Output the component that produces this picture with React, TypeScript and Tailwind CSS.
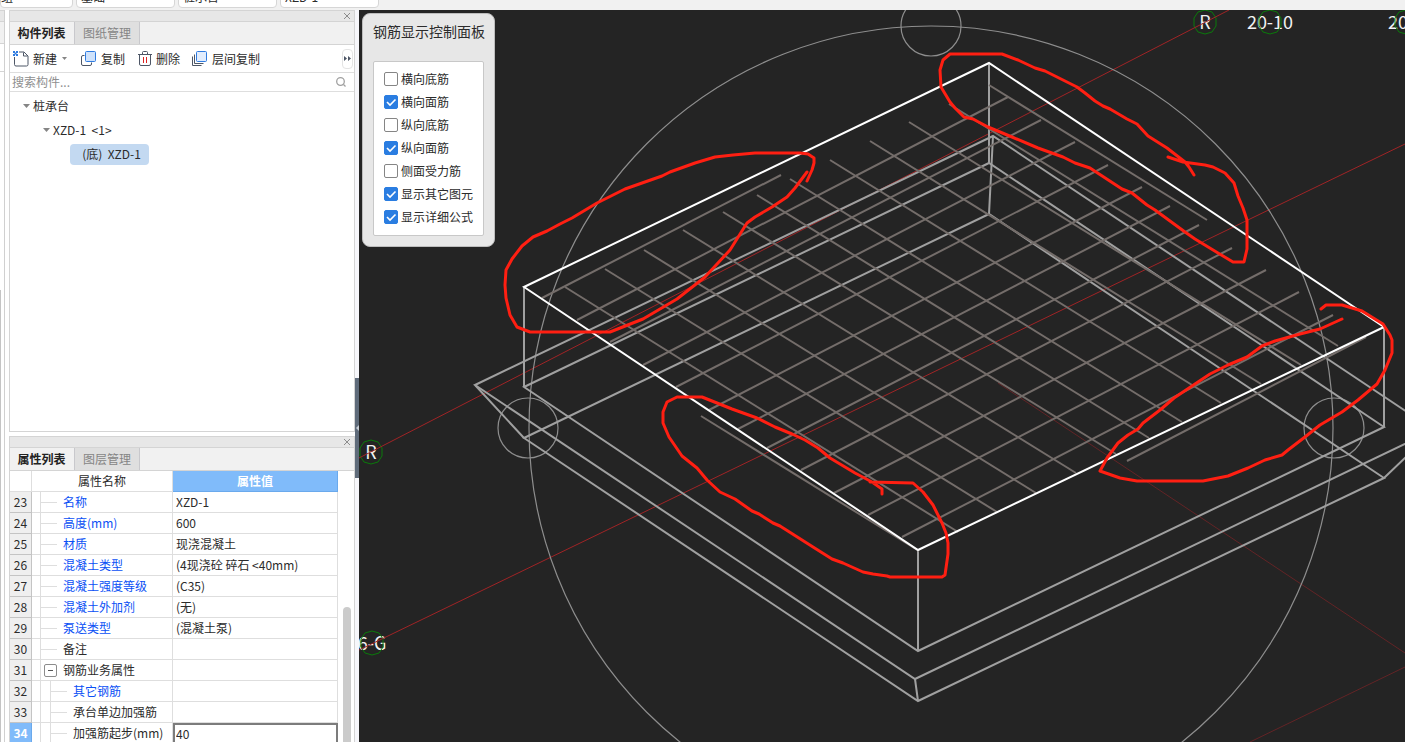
import React, { useState } from "react";

type PropertyRow = {
    id: number,
    name: string,
    value: string,
    color: string,
    level: number,
    group?: boolean
}

type Point = [number, number];

const BLUE = "text-[#0a50f5]";
const DARK = "text-[#2b2b2b]";

const rows: PropertyRow[] = [
    { id: 23, name: "名称", value: "XZD-1", color: BLUE, level: 1 },
    { id: 24, name: "高度(mm)", value: "600", color: BLUE, level: 1 },
    { id: 25, name: "材质", value: "现浇混凝土", color: BLUE, level: 1 },
    { id: 26, name: "混凝土类型", value: "(4现浇砼 碎石 <40mm)", color: BLUE, level: 1 },
    { id: 27, name: "混凝土强度等级", value: "(C35)", color: BLUE, level: 1 },
    { id: 28, name: "混凝土外加剂", value: "(无)", color: BLUE, level: 1 },
    { id: 29, name: "泵送类型", value: "(混凝土泵)", color: BLUE, level: 1 },
    { id: 30, name: "备注", value: "", color: DARK, level: 1 },
    { id: 31, name: "钢筋业务属性", value: "", color: DARK, level: 1, group: true },
    { id: 32, name: "其它钢筋", value: "", color: BLUE, level: 2 },
    { id: 33, name: "承台单边加强筋", value: "", color: DARK, level: 2 },
    { id: 34, name: "加强筋起步(mm)", value: "40", color: DARK, level: 2 },
];

const displayOptions = [
    { label: "横向底筋", checked: false },
    { label: "横向面筋", checked: true },
    { label: "纵向底筋", checked: false },
    { label: "纵向面筋", checked: true },
    { label: "侧面受力筋", checked: false },
    { label: "显示其它图元", checked: true },
    { label: "显示详细公式", checked: true },
];

// x1, y1, x2, y2
const rebars = [
    [542, 298, 781, 175], [577, 320, 1008, 97], [610, 342, 1041, 120], [643, 365, 1075, 142],
    [676, 387, 1108, 165], [709, 410, 1142, 187], [738, 429, 1170, 206], [767, 448, 1199, 225],
    [801, 470, 1232, 248], [834, 493, 1266, 270], [868, 515, 1299, 292], [902, 537, 1333, 315],
    [1127, 461, 1366, 337],
    [989, 85, 1207, 220], [949, 104, 1338, 346], [909, 122, 1301, 365], [870, 141, 1261, 384],
    [830, 160, 1221, 403], [790, 179, 1182, 422], [757, 195, 1149, 438], [723, 212, 1116, 454],
    [683, 230, 1076, 473], [644, 250, 1036, 493], [605, 269, 997, 512], [565, 287, 958, 532],
    [701, 416, 919, 551],
];

const solidEdges = [
    "M524 287V387M989 63V163M1384 327V427M918 550V651",
    "M524 387L989 163L1384 427L918 651Z",
    "M475 385L993 136L1434 430L915 679Z",
    "M524 438L989 214L1384 478L918 701Z",
    "M475 385L524 438M993 136L989 214M1434 430L1384 478M915 679L918 701",
];

const markups = [
    "807,181 812,170 814,163 814,158 808,154 800,153 755,153 733,155 715,157 695,163 670,172 662,176 625,189 597,203 572,218 560,224 547,231 533,237 522,246 512,259 506,270 505,285 506,298 510,315 517,327 530,332 610,332 643,319 677,299 705,277 730,250 747,223 755,217 772,207 787,197 795,188 807,172",
    "1194,175 1189,167 1185,162 1167,148 1148,136 1137,124 1127,119 1110,109 1103,106 1095,101 1085,93 1077,87 1045,71 1035,68 1018,60 1002,54 950,54 943,60 940,70 941,87 950,102 955,108 964,117 973,119 988,127 1012,137 1038,148 1063,157 1075,163 1090,168 1122,189 1132,193 1147,205 1155,210 1185,232 1195,239 1218,253 1233,262 1244,262 1247,249 1247,220 1243,208 1238,196 1234,183 1225,173 1213,167 1205,165 1183,162 1168,157",
    "1321,309 1326,305 1342,305 1362,311 1383,324 1390,335 1392,340 1392,353 1385,370 1377,384 1358,400 1342,412 1320,425 1305,437 1288,450 1282,455 1265,460 1248,468 1228,476 1203,481 1137,481 1120,478 1100,471 1107,458 1118,443 1128,435 1138,429 1143,423 1160,410 1174,398 1192,386 1210,374 1228,365 1247,357 1262,346 1275,341 1300,334 1320,329 1342,319",
    "882,494 882,489 872,482 855,473 830,458 818,448 805,440 792,434 775,427 757,418 732,409 702,397 677,397 667,402 663,412 663,423 669,437 682,456 697,468 707,480 720,492 735,499 752,511 759,514 773,523 780,526 813,547 832,559 843,563 863,572 873,574 887,576 890,577 942,577 945,575 948,554 948,543 946,533 942,523 933,505 923,492 913,483 870,482",
];

const gridLabels = [
    { text: "R", x: 371, y: 452, cx: 371 },
    { text: "6-G", x: 372, y: 643, cx: 372 },
    { text: "R", x: 1205, y: 22, cx: 1205 },
    { text: "20-10", x: 1270, y: 22, cx: 1270 },
    { text: "20-11", x: 1411, y: 22, cx: 1406 },
];

const polygon = (cx: number, cy: number, r: number, sides: number) => {
    const points: Point[] = [];
    for (let i = 0; i < sides; i++) {
        const angle = (Math.PI * 2 * i) / sides - Math.PI / 2;
        points.push([Math.round(cx + r * Math.cos(angle)), Math.round(cy + r * Math.sin(angle))]);
    }
    return points.map(p => p.join(",")).join(" ");
}

const NewIcon = () => (
    <svg width="16" height="16" viewBox="0 0 16 16" fill="none">
        <path d="M1.500 6V13.500Q1.500 15 3 15H13.500Q15 15 15 13.500V5L11 1H6" stroke="#4d5666" />
        <path d="M10.500 1.500V5H14.500" stroke="#4d5666" />
        <path d="M0 0h2v2h-2zM3 0h2v2h-2zM1.500 1.500h2v2h-2zM0 3h2v2h-2zM3 3h2v2h-2z" fill="#2f7be0" />
    </svg>
)

const CopyIcon = () => (
    <svg width="15" height="15" viewBox="0 0 15 15" fill="none">
        <path d="M3.500 4.500H2Q.500 4.500 .500 6V13Q.500 14.500 2 14.500H9Q10.500 14.500 10.500 13V11.500" stroke="#4d5666" />
        <rect x="4.500" y=".5" width="10" height="10" rx="1" fill="#cfe2fb" stroke="#2f7be0" />
    </svg>
)

const DeleteIcon = () => (
    <svg width="14" height="15" viewBox="0 0 14 15" fill="none">
        <path d="M0 3.500H14M4.500 3V1.500Q4.500 .500 5.500 .500H8.500Q9.500 .500 9.500 1.500V3M1.500 3.500V13Q1.500 14.500 3 14.500H11Q12.500 14.500 12.500 13V3.500" stroke="#4d5666" />
        <path d="M5.500 6V12M8.500 6V12" stroke="#dd2222" />
    </svg>
)

const FloorCopyIcon = () => (
    <svg width="15" height="15" viewBox="0 0 15 15" fill="none">
        <path d="M2.500 3.500V12.500H11.500M.500 5.500V14.500H9.500" stroke="#4d5666" />
        <rect x="4.500" y=".5" width="10" height="10" rx="1" fill="#e2edfd" stroke="#2f7be0" />
    </svg>
)

const PanelHeader = ({ tabs }: { tabs: string[] }) => (
    <>
        <div className="flex h-3 shrink-0 items-center justify-end border-y border-[#d4d4d4] bg-[#e7e7e7] pr-[3px]">
            <button aria-label="关闭" className="text-[#8c8c8c]">
                <svg width="8" height="8" viewBox="0 0 8 8"><path d="M1 1L7 7M7 1L1 7" stroke="currentColor" /></svg>
            </button>
        </div>
        <div className="flex h-[23px] shrink-0 border-b border-[#d4d4d4] bg-[#f1f1f1]" role="tablist">
            {tabs.map((tab, index) => (
                <button
                    key={tab}
                    role="tab"
                    aria-selected={index === 0}
                    className={index === 0
                        ? "w-[65px] border-r border-[#c8c8cc] pr-px font-bold text-[#222]"
                        : "w-[65px] border-r border-[#c8c8cc] bg-[#dfdfdf] text-[#858585]"}
                >
                    {tab}
                </button>
            ))}
        </div>
    </>
)

const TopBar = () => (
    <header className="flex h-[10px] shrink-0 items-end gap-[3px] overflow-hidden bg-[#f1f1f1] pb-[2px]">
        {[
            { label: "楼层", value: "组", width: "w-[73px] pl-0" },
            { label: "构件大类", value: "基础", width: "w-[99px] pl-1" },
            { label: "构件类型", value: "桩承台", width: "w-[99px] pl-1" },
            { label: "构件", value: "XZD-1", width: "w-[99px] pl-1" },
        ].map(item => (
            <select
                key={item.label}
                aria-label={item.label}
                className={`${item.width} h-[22px] shrink-0 appearance-none rounded-sm border border-[#d6d6d6] bg-white text-xs leading-5 ${DARK}`}
            >
                <option>{item.value}</option>
            </select>
        ))}
    </header>
)

const Caret = () => (
    <svg width="7" height="4" viewBox="0 0 7 4" className="shrink-0"><path d="M0 0H7L3.500 4Z" fill="#858585" /></svg>
)

const ComponentPanel = () => (
    <section className="flex h-[422px] shrink-0 flex-col border-x border-b border-[#d4d4d4] bg-white">
        <PanelHeader tabs={["构件列表", "图纸管理"]} />
        <div className="flex h-7 shrink-0 items-center border-b border-[#dedede] pl-[3px] pr-px">
            <button className="flex items-center gap-1"><NewIcon />新建</button>
            <button aria-label="新建选项" className="mx-[5px] flex w-[8px] items-center"><svg width="5" height="3" viewBox="0 0 5 3"><path d="M0 0H5L2.500 3Z" fill="#858585" /></svg></button>
            <button className="ml-[6px] flex items-center gap-[5px]"><CopyIcon />复制</button>
            <button className="ml-[13px] flex items-center gap-1"><DeleteIcon />删除</button>
            <button className="ml-3 flex items-center gap-[5px]"><FloorCopyIcon />层间复制</button>
            <button aria-label="更多" className="ml-auto flex h-5 w-[11px] items-center justify-center rounded-sm border border-[#e4e4e4]">
                <svg width="7" height="5" viewBox="0 0 7 5"><path d="M0 0L3 2.500L0 5ZM4 0L7 2.500L4 5Z" fill="#4d5666" /></svg>
            </button>
        </div>
        <div className="flex h-[19px] shrink-0 items-center border-b border-[#dedede] pr-2 pl-[2px]">
            <input aria-label="搜索构件" placeholder="搜索构件..." className="min-w-0 flex-1 outline-none placeholder:text-[#8f8f8f]" />
            <svg width="10" height="10" viewBox="0 0 10 10" fill="none" stroke="#a0a0a0"><circle cx="4.500" cy="4.500" r="3.800" strokeWidth="1.300" /><path d="M7.500 7.500L9.500 9.500" strokeWidth="1.300" /></svg>
        </div>
        <ul className="pt-[2px] leading-6" role="tree">
            <li className="flex h-6 items-center gap-[3px] pl-[13px]" role="treeitem"><Caret />桩承台</li>
            <li className="flex h-6 items-center gap-[3px] pl-[33px]" role="treeitem"><Caret /><span className="whitespace-pre">XZD-1  &lt;1&gt;</span></li>
            <li className="flex h-6 items-center pl-[60px]" role="treeitem" aria-selected>
                <span className="flex h-[21px] w-[79px] items-center justify-center rounded-sm bg-[#c3d9f1] pl-1 whitespace-pre">(底)  XZD-1</span>
            </li>
        </ul>
    </section>
)

const NameCell = ({ row }: { row: PropertyRow }) => (
    <div className="flex h-5 items-center">
        <span className="h-full w-[9px] shrink-0 border-r border-[#dedede]" />
        {row.level === 2 && <span className="h-full w-[10px] shrink-0 border-r border-[#dedede]" />}
        {row.group
            ? <button aria-label="折叠" className="ml-[3px] mr-[6px] flex size-[13px] shrink-0 items-center justify-center rounded-xs border border-[#8c8c8c] bg-white"><span className="h-px w-[5px] bg-[#555]" /></button>
            : <span className="mr-[6px] h-px w-4 shrink-0 bg-[#dedede]" />}
        <span className={`${row.color} whitespace-nowrap`}>{row.name}</span>
    </div>
)

const PropertyPanel = () => {
    const [offset, setOffset] = useState<string>("40");

    return (
        <section className="mt-1 flex min-h-0 flex-1 flex-col overflow-hidden border-x border-[#d4d4d4] bg-white">
            <PanelHeader tabs={["属性列表", "图层管理"]} />
            <div className="flex min-h-0 flex-1 items-start overflow-hidden">
                <table className="w-[328px] shrink-0 table-fixed border-separate border-spacing-0">
                    <colgroup>
                        <col className="w-[22px]" />
                        <col className="w-[141px]" />
                        <col className="w-[165px]" />
                    </colgroup>
                    <thead>
                        <tr className="h-[21px]">
                            <th className="border-r border-b border-[#dedede] p-0" />
                            <th className="border-r border-b border-[#dedede] p-0 font-normal">属性名称</th>
                            <th className="border-r border-b border-[#6aa9ec] bg-[#80bbfa] p-0 font-bold text-white">属性值</th>
                        </tr>
                    </thead>
                    <tbody>
                        {rows.map(row => (
                            <tr key={row.id} className="h-[21px]">
                                <th className={row.id === 34
                                    ? "border-r border-b border-[#6aa9ec] bg-[#80bbfa] p-0 font-bold text-white"
                                    : "border-r border-b border-[#c4c4c4] bg-[#efefef] p-0 font-normal"}>{row.id}</th>
                                <td className="border-r border-b border-[#dedede] p-0"><NameCell row={row} /></td>
                                {row.id === 34
                                    ? <td className="border-2 border-[#7c7c7c] p-0"><input aria-label={row.name} value={offset} onChange={e => setOffset(e.target.value)} className="block h-[17px] w-full pl-px outline-none" /></td>
                                    : <td className="border-r border-b border-[#dedede] py-0 pr-0 pl-[3px] whitespace-nowrap">{row.value}</td>}
                            </tr>
                        ))}
                    </tbody>
                </table>
                <div className="flex-1 px-[5px] pt-[136px]">
                    <div className="h-[300px] w-2 rounded-full bg-[#cbcbcb]" />
                </div>
            </div>
        </section>
    )
}

const DisplayPanel = () => {
    const [options, setOptions] = useState(displayOptions);

    const toggle = (label: string) => {
        setOptions(options.map(item => item.label === label ? { ...item, checked: !item.checked } : item));
    }

    return (
        <aside className="absolute top-[3px] left-[3px] w-[133px] rounded-lg border border-[#bdbdbd] bg-[#e7e7e7] px-[10px] pt-[7px] pb-[10px]">
            <h2 className="text-sm leading-5 whitespace-nowrap">钢筋显示控制面板</h2>
            <div className="mt-5 rounded-xs border border-[#c8c8c8] bg-white px-[10px] pt-[5px] pb-[7px]">
                {options.map(item => (
                    <label key={item.label} className="flex h-[23px] items-center gap-[3px] whitespace-nowrap">
                        <span className="grid size-[14px] shrink-0">
                            <input
                                type="checkbox"
                                checked={item.checked}
                                onChange={() => toggle(item.label)}
                                className="col-start-1 row-start-1 size-[14px] appearance-none rounded-xs border border-[#858585] bg-white checked:border-[#2a7de1] checked:bg-[#2a7de1]"
                            />
                            {item.checked && (
                                <svg viewBox="0 0 14 14" className="pointer-events-none col-start-1 row-start-1" fill="none">
                                    <path d="M3 7L6 10L11.500 4.500" stroke="#fff" strokeWidth="1.600" />
                                </svg>
                            )}
                        </span>
                        {item.label}
                    </label>
                ))}
            </div>
        </aside>
    )
}

const Viewport = () => (
    <main className="relative min-w-0 flex-1 overflow-hidden bg-[#242424]">
        <svg viewBox="359 10 1046 732" preserveAspectRatio="xMinYMin slice" className="block h-full w-full" fill="none">
            {gridLabels.map(label => (
                <g key={`${label.text}-${label.y}`}>
                    <text x={label.x} y={label.y + 7} textAnchor="middle" fontSize="18" fill="#f2f2f2">{label.text}</text>
                    <polygon points={polygon(label.cx, label.y, 12, 10)} stroke="#0b7a0b" />
                </g>
            ))}
            <g stroke="#a02426" strokeWidth="1">
                <path d="M359 458L1229 10M359 650L1405 144" />
                <path d="M998 383L1405 653M1250 742L1405 667" stroke="#632426" />
            </g>
            <g stroke="#8e8e8e" strokeWidth="1.200">
                <circle cx="931" cy="428" r="402" />
                <circle cx="931" cy="26" r="30" />
                <circle cx="528" cy="428" r="30" />
                <circle cx="1334" cy="428" r="30" />
            </g>
            <g stroke="#a0a0a0" strokeWidth="2">
                {solidEdges.map(d => <path key={d} d={d} />)}
            </g>
            <g stroke="#746d6a" strokeWidth="2">
                {rebars.map(([x1, y1, x2, y2]) => (
                    <line key={`${x1}-${y1}`} x1={x1} y1={y1} x2={x2} y2={y2} />
                ))}
            </g>
            <path d="M524 287L989 63L1384 327L918 550Z" stroke="#fff" strokeWidth="2" />
            <g stroke="#ff1f12" strokeWidth="3" strokeLinecap="round" strokeLinejoin="round">
                {markups.map(points => <polyline key={points} points={points} />)}
            </g>
        </svg>
        <DisplayPanel />
    </main>
)

export default function App() {
    return (
        <div className={`flex h-screen flex-col overflow-hidden bg-white font-['Noto_Sans_CJK_SC',sans-serif] text-xs leading-4 ${DARK}`}>
            <TopBar />
            <div className="flex min-h-0 flex-1">
                <div className="mr-1 flex w-[5px] shrink-0 flex-col border-r border-[#d0d0d0] bg-white">
                    <div className="h-3 border-y border-[#d4d4d4] bg-[#e7e7e7]" />
                    <div className="h-[22px] border-b border-[#d4d4d4] bg-[#f1f1f1]" />
                    <div className="h-7 border-b border-[#d4d4d4]" />
                    <div className="mt-[218px] flex-1 border-l border-[#c4c4c4]" />
                </div>
                <div className="flex w-[346px] shrink-0 flex-col">
                    <ComponentPanel />
                    <PropertyPanel />
                </div>
                <div className="w-1 shrink-0 bg-[#f7f7fb] pt-[368px]">
                    <button aria-label="收起面板" className="flex h-[100px] w-1 items-center bg-[#5f6b7a]">
                        <svg width="4" height="6" viewBox="0 0 4 6"><path d="M4 0V6L1 3Z" fill="#c8ced6" /></svg>
                    </button>
                </div>
                <Viewport />
            </div>
        </div>
    )
}
